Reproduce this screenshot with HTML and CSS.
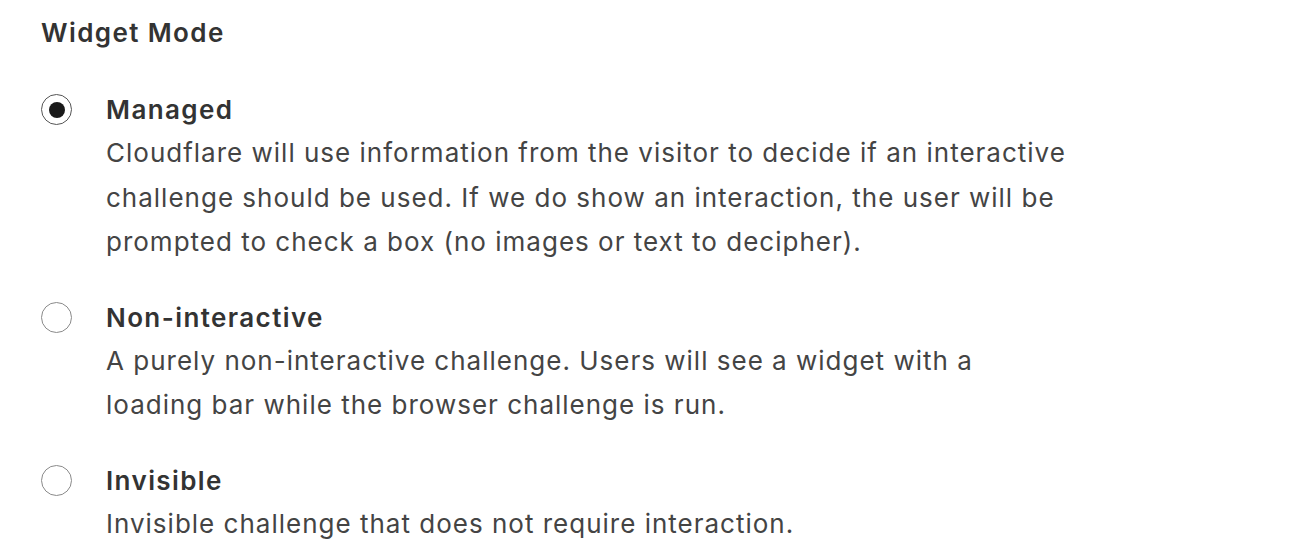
FILE: index.html
```html
<!DOCTYPE html>
<html>
<head>
<meta charset="utf-8">
<link rel="stylesheet" href="styles.css">
</head>
<body>
<div class="page">
  <div class="title">Widget Mode</div>
  <div class="options">
    <div class="option">
      <span class="radio checked"><span class="dot"></span></span>
      <div class="text">
        <div class="label">Managed</div>
        <div class="desc">Cloudflare will use information from the visitor to decide if an interactive<br>challenge should be used. If we do show an interaction, the user will be<br>prompted to check a box (no images or text to decipher).</div>
      </div>
    </div>
    <div class="option">
      <span class="radio"></span>
      <div class="text">
        <div class="label">Non-interactive</div>
        <div class="desc">A purely non-interactive challenge. Users will see a widget with a<br>loading bar while the browser challenge is run.</div>
      </div>
    </div>
    <div class="option">
      <span class="radio"></span>
      <div class="text">
        <div class="label">Invisible</div>
        <div class="desc">Invisible challenge that does not require interaction.</div>
      </div>
    </div>
  </div>
</div>
</body>
</html>
```
FILE: styles.css
```css
html, body {
  margin: 0;
  background: #ffffff;
}
body {
  font-family: Inter, "Noto Sans", sans-serif;
  color: #333333;
}
.page {
  padding: 12px 0 0 41px;
}
.title {
  font-size: 26px;
  font-weight: 600;
  line-height: 42px;
  letter-spacing: 1.4px;
  color: #333333;
}
.options {
  display: flex;
  flex-direction: column;
  gap: 32px;
  margin-top: 35px;
}
.option {
  display: flex;
  align-items: flex-start;
  gap: 34px;
}
.radio {
  flex: none;
  width: 31px;
  height: 31px;
  margin-top: 5px;
  border: 1.5px solid #8a8a8a;
  border-radius: 50%;
  box-sizing: border-box;
  display: flex;
  align-items: center;
  justify-content: center;
}
.radio.checked {
  border-color: #555555;
}
.dot {
  width: 16px;
  height: 16px;
  border-radius: 50%;
  background: #1a1a1a;
}
.label {
  font-size: 26px;
  font-weight: 600;
  line-height: 42px;
  letter-spacing: 1.4px;
  color: #333333;
}
.desc {
  font-size: 26px;
  font-weight: 400;
  line-height: 44.5px;
  letter-spacing: 1px;
  color: #444444;
}
```
